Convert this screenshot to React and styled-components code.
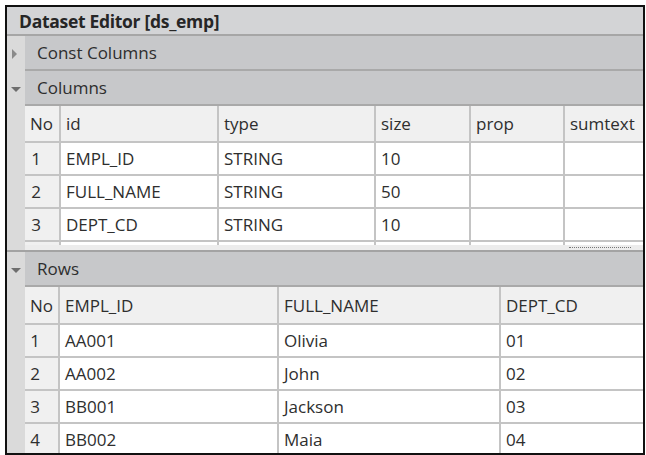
import React from "react";
import styled, { createGlobalStyle } from "styled-components";

const GlobalStyle = createGlobalStyle`
  html, body {
    margin: 0;
    padding: 0;
    background: #ffffff;
  }
  body {
    font-family: "Open Sans", "Noto Sans", sans-serif;
    color: #2e2e2e;
  }
`;

const columnDefs = [
  { id: "EMPL_ID", type: "STRING", size: "10" },
  { id: "FULL_NAME", type: "STRING", size: "50" },
  { id: "DEPT_CD", type: "STRING", size: "10" },
  { id: "", type: "", size: "" },
];

const rows = [
  { empl: "AA001", name: "Olivia", dept: "01" },
  { empl: "AA002", name: "John", dept: "02" },
  { empl: "BB001", name: "Jackson", dept: "03" },
  { empl: "BB002", name: "Maia", dept: "04" },
];

function App() {
  return (
    <>
      <GlobalStyle />
      <Frame>
        <Title>Dataset Editor [ds_emp]</Title>

        <SectionBar>
          <Toggle>
            <Caret open={false} />
          </Toggle>
          <Label>Const Columns</Label>
        </SectionBar>

        <SectionBar>
          <Toggle>
            <Caret open />
          </Toggle>
          <Label>Columns</Label>
        </SectionBar>

        <Body>
          <GutterFill />
          <GridArea>
            <GridView height={139}>
              <Grid cols="36px 158px 157px 95px 94px 100px">
                <HeadCell>No</HeadCell>
                <HeadCell>id</HeadCell>
                <HeadCell>type</HeadCell>
                <HeadCell>size</HeadCell>
                <HeadCell>prop</HeadCell>
                <HeadCell>sumtext</HeadCell>
                {columnDefs.map((c, i) => (
                  <React.Fragment key={i}>
                    <NoCell>{c.id ? i + 1 : ""}</NoCell>
                    <Cell>{c.id}</Cell>
                    <Cell>{c.type}</Cell>
                    <Cell>{c.size}</Cell>
                    <Cell />
                    <Cell />
                  </React.Fragment>
                ))}
              </Grid>
            </GridView>
            <ScrollStrip>
              <FocusMark />
            </ScrollStrip>
          </GridArea>
        </Body>

        <Divider />

        <SectionBar>
          <Toggle>
            <Caret open />
          </Toggle>
          <Label>Rows</Label>
        </SectionBar>

        <Body grow>
          <GutterFill />
          <GridArea>
            <GridView>
              <Grid cols="35px 219px 222px 200px" head={38}>
                <HeadCell>No</HeadCell>
                <HeadCell>EMPL_ID</HeadCell>
                <HeadCell>FULL_NAME</HeadCell>
                <HeadCell>DEPT_CD</HeadCell>
                {rows.map((r, i) => (
                  <React.Fragment key={r.empl}>
                    <NoCell>{i + 1}</NoCell>
                    <Cell>{r.empl}</Cell>
                    <Cell>{r.name}</Cell>
                    <Cell>{r.dept}</Cell>
                  </React.Fragment>
                ))}
              </Grid>
            </GridView>
          </GridArea>
        </Body>
      </Frame>
    </>
  );
}

export default App;

const Frame = styled.div`
  margin: 5px 0 0 5px;
  width: 636px;
  height: 446px;
  border: 2px solid #111111;
  display: flex;
  flex-direction: column;
  overflow: hidden;
  background: #dadada;
`;

const Title = styled.div`
  height: 27px;
  flex-shrink: 0;
  padding-left: 12px;
  display: flex;
  align-items: center;
  background: #d3d4d6;
  border-bottom: 2px solid #a6a6a6;
  font-size: 17.5px;
  font-weight: 700;
  color: #262626;
  letter-spacing: -0.3px;
`;

const SectionBar = styled.div`
  display: flex;
  height: 35px;
  flex-shrink: 0;
`;

const Toggle = styled.div`
  width: 18px;
  flex-shrink: 0;
  display: flex;
  align-items: center;
  justify-content: center;
  background: #dadada;
`;

const Caret = styled.span`
  width: 0;
  height: 0;
  ${(p) =>
    p.open
      ? `
    border-left: 5px solid transparent;
    border-right: 5px solid transparent;
    border-top: 5px solid #6e6e6e;
    margin-top: 2px;
  `
      : `
    border-top: 5px solid transparent;
    border-bottom: 5px solid transparent;
    border-left: 5px solid #8a8a8a;
    margin-left: -3px;
  `}
`;

const Label = styled.div`
  flex: 1;
  display: flex;
  align-items: center;
  padding-left: 12px;
  background: #c7c8ca;
  border-bottom: 2px solid #a9a9a9;
  font-size: 17px;
  color: #2e2e2e;
`;

const Body = styled.div`
  display: flex;
  flex-shrink: 0;
  ${(p) => (p.grow ? "flex: 1; min-height: 0;" : "")}
`;

const GutterFill = styled.div`
  width: 18px;
  flex-shrink: 0;
  background: #dadada;
`;

const GridArea = styled.div`
  flex: 1;
  min-width: 0;
  display: flex;
  flex-direction: column;
  background: #ffffff;
`;

const GridView = styled.div`
  overflow: hidden;
  ${(p) => (p.height ? `height: ${p.height}px;` : "flex: 1;")}
`;

const Grid = styled.div`
  display: grid;
  grid-template-columns: ${(p) => p.cols};
  grid-template-rows: ${(p) => p.head || 37}px;
  grid-auto-rows: 33px;
  width: max-content;
  font-size: 17px;
`;

const Cell = styled.div`
  box-sizing: border-box;
  border-right: 2px solid #c4c4c4;
  border-bottom: 2px solid #c4c4c4;
  padding: 0 5px;
  display: flex;
  align-items: center;
  white-space: nowrap;
  overflow: hidden;
  background: #ffffff;
  color: #2e2e2e;
`;

const HeadCell = styled(Cell)`
  background: #f0f0f0;
`;

const NoCell = styled(Cell)`
  background: #f0f0f0;
  justify-content: flex-end;
  padding-right: 18px;
`;

const ScrollStrip = styled.div`
  height: 5px;
  flex-shrink: 0;
  background: #ececec;
  position: relative;
`;

const FocusMark = styled.div`
  position: absolute;
  left: 544px;
  top: 2px;
  width: 62px;
  border-top: 1px dotted #777777;
`;

const Divider = styled.div`
  height: 2px;
  flex-shrink: 0;
  background: #a3a3a3;
`;
